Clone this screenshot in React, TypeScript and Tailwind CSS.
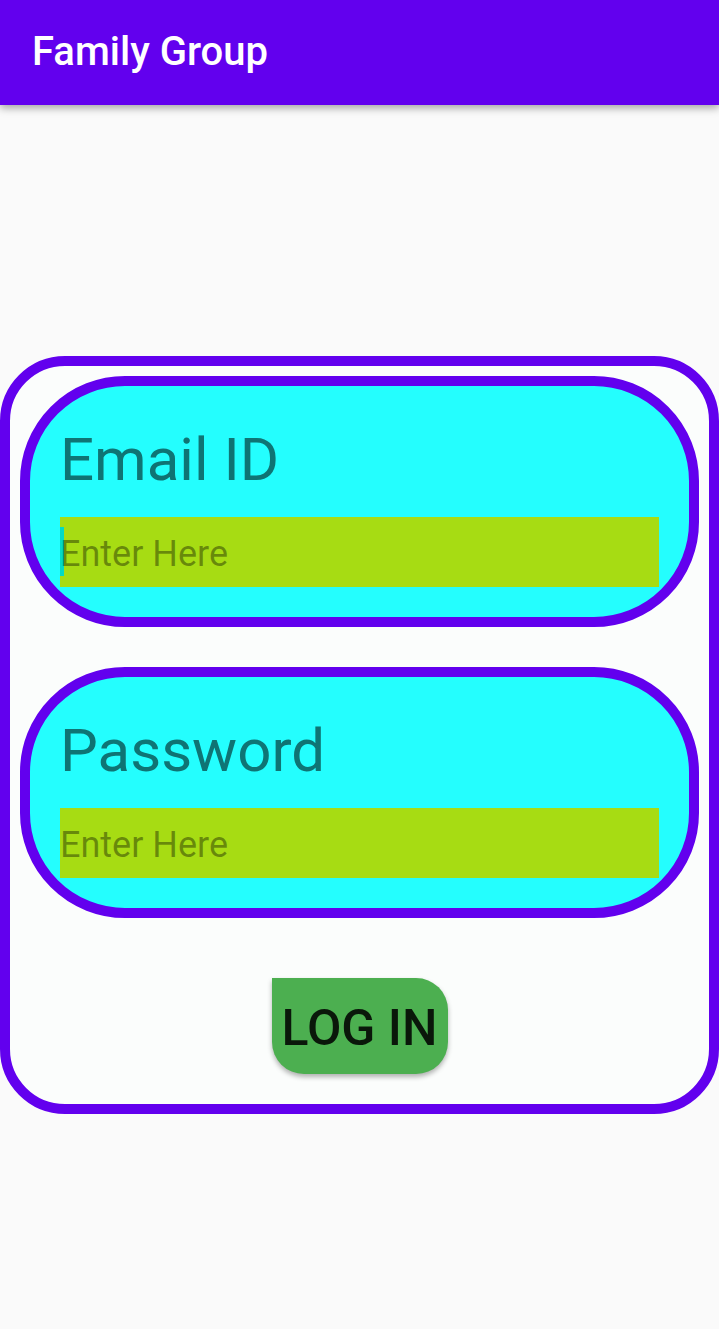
import { useState } from "react";

type FieldProps = {
  id: string;
  label: string;
  type: string;
  showCursor?: boolean;
};

function Field({ id, label, type, showCursor = false }: FieldProps) {
  const [value, setValue] = useState("");
  return (
    <div className="flex flex-col rounded-[105px] border-10 border-[#6200ee] bg-[#24fefe] p-[30px]">
      <label htmlFor={id} className="mb-[14px] text-[60px] leading-[87px] text-[#0f7474]">
        {label}
      </label>
      <div className="relative flex h-[70px] bg-[#a7dc13]">
        {showCursor && value === "" && (
          <span className="absolute top-[10px] left-0 h-[49px] w-1 bg-[#03dac5]" />
        )}
        <input
          id={id}
          type={type}
          value={value}
          onChange={(event) => setValue(event.target.value)}
          placeholder="Enter Here"
          className="relative w-full min-w-0 bg-transparent pt-1 text-[36px] text-black/87 outline-none placeholder:text-black/38"
        />
      </div>
    </div>
  );
}

export default function App() {
  return (
    <div className="flex min-h-screen flex-col bg-[#fafafa] font-['Roboto',sans-serif]">
      <header className="flex h-[105px] items-center bg-[#6200ee] px-8 pb-0.5 shadow-[0_3px_8px_rgba(0,0,0,0.35)]">
        <h1 className="text-[40px] leading-[48px] font-medium text-white">Family Group</h1>
      </header>
      <main className="pt-[251px]">
        <form
          onSubmit={(event) => event.preventDefault()}
          className="flex flex-col gap-10 rounded-[65px] border-10 border-[#6200ee] bg-[#fbfdfc] px-[10px] pt-[10px] pb-[30px]"
        >
          <Field id="email" label="Email ID" type="email" showCursor />
          <Field id="password" label="Password" type="password" />
          <button
            type="submit"
            className="mt-5 h-24 self-center rounded-[32px] rounded-tl-none bg-[#4caf50] px-[10px] pt-1 text-[50px] leading-[60px] font-medium text-[#0a170a] shadow-[0_3px_5px_rgba(0,0,0,0.3)]"
          >
            LOG IN
          </button>
        </form>
      </main>
    </div>
  );
}
